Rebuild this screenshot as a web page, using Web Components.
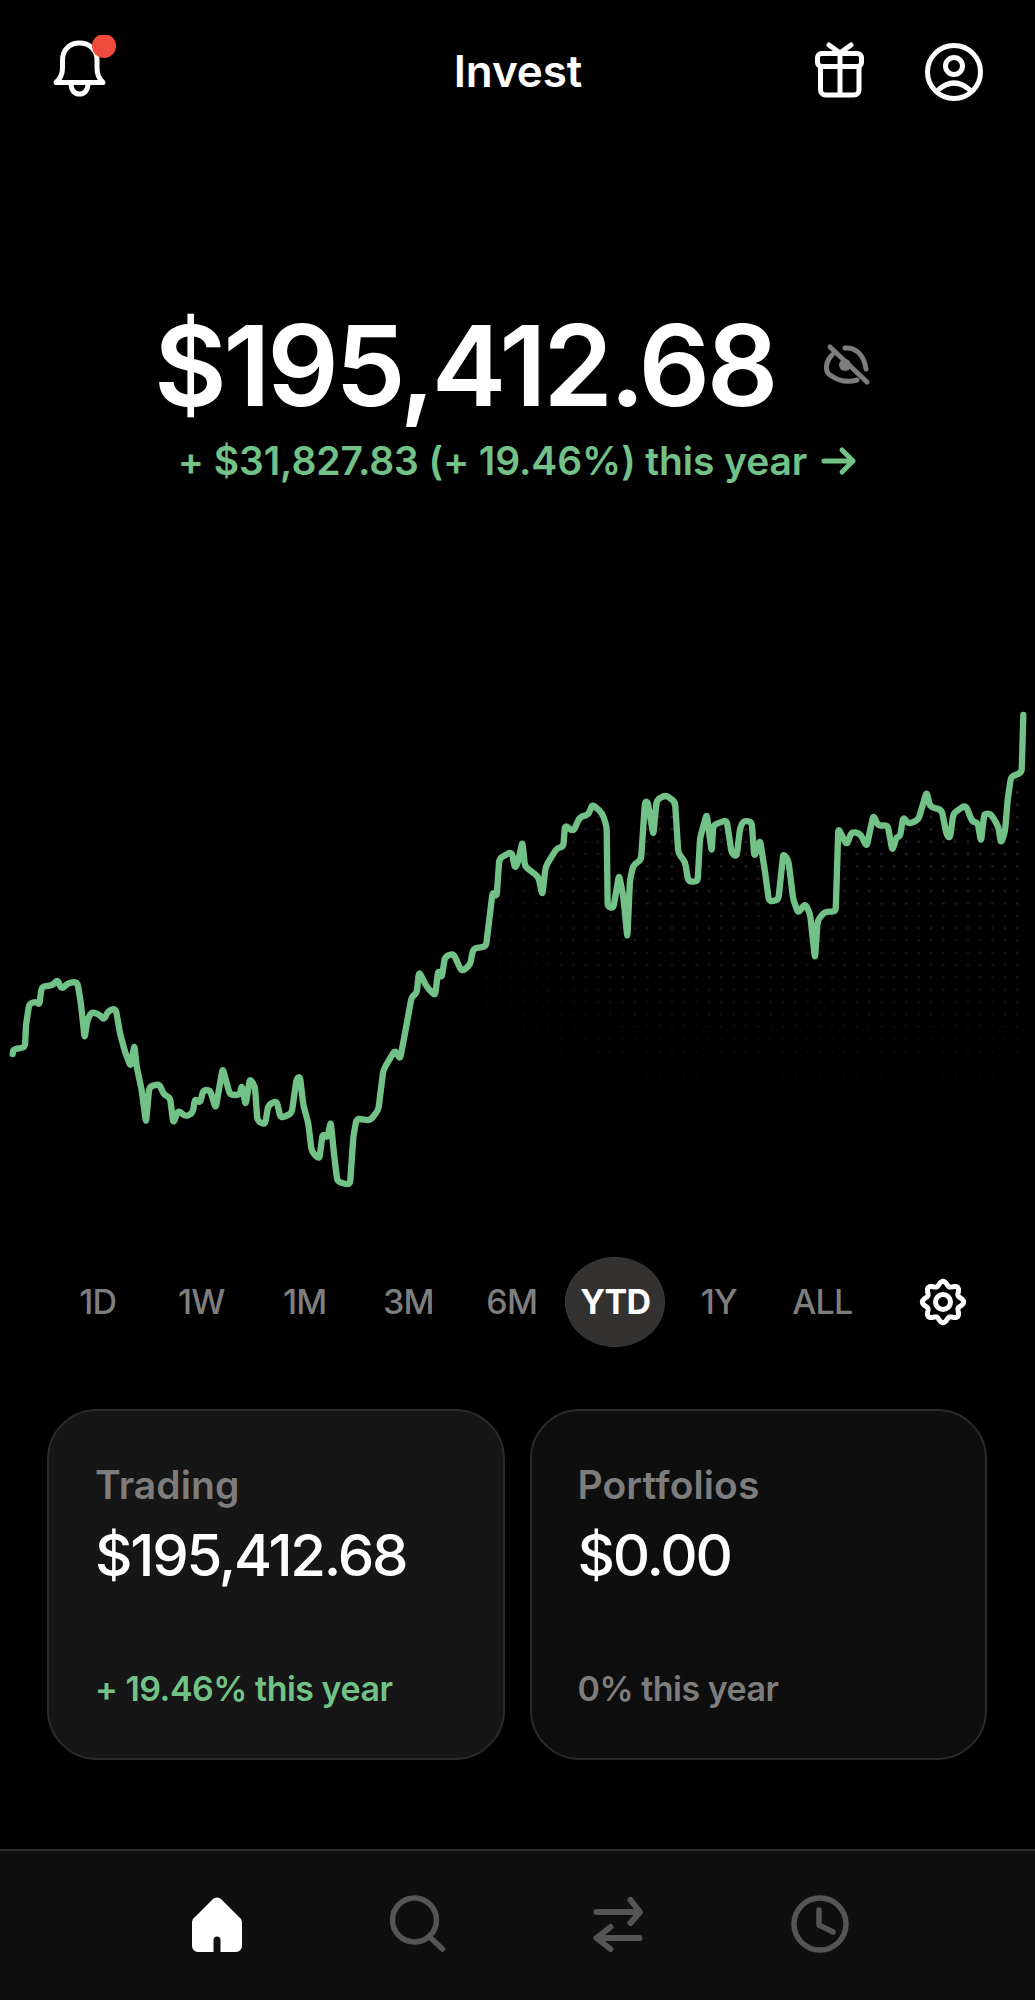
<!DOCTYPE html>
<html lang="en">
<head>
<meta charset="utf-8">
<title>Invest</title>
<style>
html,body{margin:0;background:#000;color:#fff;font-family:Inter,"Liberation Sans",sans-serif}
body{width:1035px;height:2000px;overflow:hidden;display:flex;flex-direction:column}
</style>
</head>
<body>
<invest-header title-text="Invest"></invest-header>
<balance-hero amount="$195,412.68" change="+ $31,827.83 (+ 19.46%) this year"></balance-hero>
<price-chart></price-chart>
<range-picker></range-picker>
<div style="display:flex;gap:25px;padding:0 48px 0 47px;margin-top:62px">
  <account-card label="Trading" amount="$195,412.68" delta="+ 19.46% this year" tone="up"></account-card>
  <account-card label="Portfolios" amount="$0.00" delta="0% this year" tone="flat"></account-card>
</div>
<tab-bar></tab-bar>
<script>
function shadow(el,html){el.attachShadow({mode:'open'}).innerHTML=html;}
const GREEN='#72c288';

customElements.define('invest-header',class extends HTMLElement{
  connectedCallback(){
    shadow(this,`<style>
      :host{display:grid;grid-template-columns:1fr auto 1fr;align-items:center;height:140px;padding:0 49px 0 50px;box-sizing:border-box;width:1035px}
      h1{margin:0;font:600 44px/52px Inter,"Liberation Sans",sans-serif;letter-spacing:-.1px;color:#fff;position:relative;top:1px}
      .r{display:flex;justify-content:flex-end;gap:54px;align-items:center}
      svg{display:block;fill:none;stroke:#fff;stroke-width:5;stroke-linecap:round;stroke-linejoin:round}
    </style>
    <svg width="70" height="70" viewBox="0 0 70 70">
      <path d="M6 47.5H53C49 44 47 40 47 33V25C47 15 39.5 8 29.5 8C19.5 8 12.5 15 12.5 25V33C12.5 40 10 44 6 47.5Z"/>
      <path d="M21 48C21 56 25 59 29.5 59C34 59 38 56 38 48"/>
      <circle cx="54" cy="11" r="12" fill="#ee4b3c" stroke="none"/>
    </svg>
    <h1>${this.getAttribute('title-text')}</h1>
    <div class="r">
      <svg width="60" height="64" viewBox="0 0 60 64">
        <rect x="9.5" y="15.5" width="44" height="13" rx="4"/>
        <path d="M12.5 28V52a5 5 0 0 0 5 5H46a5 5 0 0 0 5-5V28M32 15V57M21 7L32 15L43 7"/>
      </svg>
      <svg width="64" height="64" viewBox="0 0 64 64">
        <circle cx="32" cy="34" r="26.5"/>
        <circle cx="32" cy="28" r="8.5"/>
        <path d="M15 53Q32 37 49 53"/>
      </svg>
    </div>`);
  }
});

customElements.define('balance-hero',class extends HTMLElement{
  connectedCallback(){
    shadow(this,`<style>
      :host{display:block;height:560px;box-sizing:border-box;padding-top:169px;width:1035px}
      .row{display:flex;align-items:center;padding-left:154px;height:112px}
      .amt{font:600 112px/112px Inter,"Liberation Sans",sans-serif;letter-spacing:-3.5px;color:#fff;white-space:nowrap}
      .eye{margin-left:47px;flex:none;fill:none;stroke:#7d7d7d;stroke-width:5;stroke-linecap:round;stroke-linejoin:round}
      .sub{margin-top:18px;display:flex;justify-content:center;align-items:center;gap:14px;font:600 39px/44px Inter,"Liberation Sans",sans-serif;letter-spacing:-.1px;color:${GREEN}}
      .sub svg{fill:none;stroke:${GREEN};stroke-width:5;stroke-linecap:round;stroke-linejoin:round}
    </style>
    <div class="row"><span class="amt">${this.getAttribute('amount')}</span>
      <svg class="eye" width="50" height="46" viewBox="0 0 50 46">
        <path d="M8 5L45 40M23 6C33 5 42 12 44 27M10 13C3 20 3 30 8 33C15 38 25 41 35 38"/>
        <circle cx="23" cy="23" r="6" fill="#7d7d7d" stroke="none"/>
      </svg>
    </div>
    <div class="sub"><span>${this.getAttribute('change')}</span>
      <svg width="36" height="30" viewBox="0 0 36 30"><path d="M3 15H32M21 4L32 15L21 26"/></svg>
    </div>`);
  }
});

const A=[[38,1062],[40,1048],[75,1042],[78,975],[88,910],[110,905],[118,915],[125,860],[160,855],[172,838],[185,868],[205,848],[232,846],[242,905],[254,1015],[262,960],[275,935],[300,945],[312,960],[325,932],[347,925],[360,1000],[375,1055],[392,1100],[403,1035],[410,1100],[425,1170],[438,1268],[448,1160],[478,1152],[492,1185],[510,1192],[520,1270],[535,1230],[555,1250],[578,1240],[585,1195],[600,1210],[610,1170],[630,1170],[647,1225],[668,1105],[690,1185],[720,1185],[725,1155],[737,1215],[750,1135],[765,1160],[772,1262],[795,1275],[805,1215],[830,1202],[842,1255],[875,1240],[890,1135],[900,1130],[910,1215],[925,1270],[935,1355],[958,1378],[968,1300],[982,1315],[992,1265],[1003,1370],[1012,1445],[1050,1455],[1060,1310],[1070,1255],[1110,1262],[1135,1230],[1150,1110],[1185,1050],[1200,1078],[1215,1000],[1235,890],[1250,880],[1257,815],[1280,860],[1305,888],[1315,810],[1325,835],[1335,770],[1360,760],[1385,815],[1410,795],[1420,745],[1458,740],[1478,575],[1490,590],[1498,475],[1535,455]];
const B=[[0,505],[8,490],[22,425],[30,500],[70,530],[82,585],[92,500],[125,445],[145,440],[150,375],[175,395],[195,350],[220,345],[232,312],[262,340],[275,380],[278,620],[295,625],[312,525],[325,590],[337,712],[345,540],[355,495],[378,480],[390,305],[398,305],[415,405],[425,300],[452,285],[480,305],[490,460],[510,485],[520,545],[548,545],[555,415],[575,342],[590,455],[595,375],[635,360],[650,460],[665,470],[675,385],[685,362],[710,365],[718,470],[735,420],[750,515],[762,605],[790,600],[805,460],[820,480],[835,600],[850,640],[870,610],[885,640],[900,775],[908,660],[930,635],[962,635],[970,385],[995,435],[1010,395],[1035,400],[1055,440],[1075,345],[1090,378],[1118,375],[1132,452],[1145,410],[1155,410],[1165,350],[1180,372],[1210,360],[1235,275],[1245,320],[1280,330],[1295,405],[1305,415],[1315,340],[1352,315],[1372,365],[1388,368],[1398,425],[1408,340],[1428,342],[1450,380],[1458,430],[1470,395],[1478,300],[1488,230],[1520,218],[1525,45]].map(p=>[p[0]+1545,p[1]]);
function linePath(pts,r){
  let d=`M${pts[0][0]} ${pts[0][1]}`;
  for(let i=1;i<pts.length-1;i++){
    const [x0,y0]=pts[i-1],[x,y]=pts[i],[x1,y1]=pts[i+1];
    const l0=Math.hypot(x-x0,y-y0),l1=Math.hypot(x1-x,y1-y);
    const a=Math.min(r,l0/2)/l0,b=Math.min(r,l1/2)/l1;
    d+=`L${(x-(x-x0)*a).toFixed(1)} ${(y-(y-y0)*a).toFixed(1)}Q${x} ${y} ${(x+(x1-x)*b).toFixed(1)} ${(y+(y1-y)*b).toFixed(1)}`;
  }
  const e=pts[pts.length-1];
  return d+`L${e[0]} ${e[1]}`;
}
customElements.define('price-chart',class extends HTMLElement{
  connectedCallback(){
    const pts=A.concat(B),d=linePath(pts,12);
    shadow(this,`<style>:host{display:block;height:557px;width:1035px}svg{display:block}</style>
    <svg width="1035" height="500" viewBox="0 0 3105 1500">
      <defs>
        <pattern id="dots" width="37" height="37" patternUnits="userSpaceOnUse"><circle cx="18" cy="18" r="4.5" fill="#333"/></pattern>
        <linearGradient id="fv" x1="0" y1="0" x2="0" y2="1"><stop offset="0" stop-color="#fff" stop-opacity=".85"/><stop offset=".45" stop-color="#fff" stop-opacity=".45"/><stop offset=".85" stop-color="#fff" stop-opacity="0"/></linearGradient>
        <linearGradient id="fh" x1="0" y1="0" x2="1" y2="0"><stop offset=".38" stop-color="#000"/><stop offset=".62" stop-color="#fff"/></linearGradient>
        <mask id="mh"><rect width="3105" height="1500" fill="url(#fh)"/></mask>
        <mask id="mv"><rect width="3105" height="1500" fill="url(#fv)"/></mask>
      </defs>
      <g mask="url(#mh)"><g mask="url(#mv)"><path d="${d}L3070 1500L1200 1500Z" fill="url(#dots)"/></g></g>
      <path d="${d}" fill="none" stroke="${GREEN}" stroke-width="19" stroke-linecap="round" stroke-linejoin="round"/>
    </svg>`);
  }
});

customElements.define('range-picker',class extends HTMLElement{
  connectedCallback(){
    const items=['1D','1W','1M','3M','6M','YTD','1Y','ALL'];
    const p=[];for(let i=0;i<=360;i+=3){const t=i*Math.PI/180,r=18.5+2.2*Math.cos(8*t);p.push((25+r*Math.sin(t)).toFixed(2)+' '+(25-r*Math.cos(t)).toFixed(2));}
    shadow(this,`<style>
      :host{display:flex;align-items:center;height:90px;padding-left:46px;width:1035px;box-sizing:border-box}
      span{flex:none;width:103.5px;height:90px;display:flex;align-items:center;justify-content:center;font:500 34px/40px Inter,"Liberation Sans",sans-serif;letter-spacing:-.8px;color:#7e7e7e}
      span.on{color:#fff;font-weight:700;position:relative;z-index:0}
      span.on::before{content:"";position:absolute;z-index:-1;left:1.75px;right:1.75px;top:0;bottom:0;border-radius:50%;background:#333231;border:1px solid #3c3b3a;box-sizing:border-box}
      svg{margin-left:44px;flex:none;fill:none;stroke:#fff;stroke-width:5;stroke-linejoin:round}
    </style>
    ${items.map(t=>`<span class="${t==='YTD'?'on':''}">${t}</span>`).join('')}
    <svg width="50" height="50" viewBox="0 0 50 50"><path d="M${p.join('L')}Z"/><circle cx="25" cy="25" r="7.5"/></svg>`);
  }
});

customElements.define('account-card',class extends HTMLElement{
  connectedCallback(){
    const up=this.getAttribute('tone')==='up';
    shadow(this,`<style>
      :host{display:flex;flex:1;flex-direction:column;box-sizing:border-box;height:351px;border-radius:50px;border:2px solid #2b2b2b;padding:0 0 0 46px;background:${up?'#161616':'#0e0e0e'}}
      .l{margin-top:51px;font:600 39px/46px Inter,"Liberation Sans",sans-serif;letter-spacing:.1px;color:#7d7d7d}
      .a{margin-top:15px;font:500 58px/64px Inter,"Liberation Sans",sans-serif;letter-spacing:-2.2px;color:#fff}
      .d{margin-top:auto;margin-bottom:47px;font:600 34px/44px Inter,"Liberation Sans",sans-serif;letter-spacing:-.5px;color:${up?GREEN:'#7d7d7d'}}
    </style>
    <div class="l">${this.getAttribute('label')}</div>
    <div class="a">${this.getAttribute('amount')}</div>
    <div class="d">${this.getAttribute('delta')}</div>`);
  }
});

customElements.define('tab-bar',class extends HTMLElement{
  connectedCallback(){
    shadow(this,`<style>
      :host{display:flex;box-sizing:border-box;width:1035px;height:151px;margin-top:89px;padding:41px 0 0 116px;background:#0f0f0f;border-top:2px solid #2c2c2c}
      div{width:201px;display:flex;justify-content:center;height:64px}
      svg{display:block;fill:none;stroke:#555;stroke-width:5.5;stroke-linecap:round;stroke-linejoin:round}
    </style>
    <div><svg width="64" height="64" viewBox="-2 0 64 64" style="stroke:none"><path fill="#fff" d="M26 7a6 6 0 0 1 8 0L52 25a6 6 0 0 1 3 5V54a6 6 0 0 1-6 6H33.5V48a3.5 3.5 0 0 0-7 0V60H11a6 6 0 0 1-6-6V30a6 6 0 0 1 3-5Z"/></svg></div>
    <div><svg width="64" height="64" viewBox="0 0 64 64"><circle cx="28.5" cy="28" r="22"/><path d="M43.5 45L56.5 57"/></svg></div>
    <div><svg width="64" height="64" viewBox="0 0 64 64" style="stroke-width:6"><path d="M9.5 20H52.5M43.5 8L53 20L43.5 31M52.5 46H9.5M23.5 35L9.5 46L23.5 57"/></svg></div>
    <div><svg width="64" height="64" viewBox="0 0 64 64"><circle cx="32" cy="32" r="26"/><path d="M31 18V33L45 40"/></svg></div>`);
  }
});
</script>
</body>
</html>
